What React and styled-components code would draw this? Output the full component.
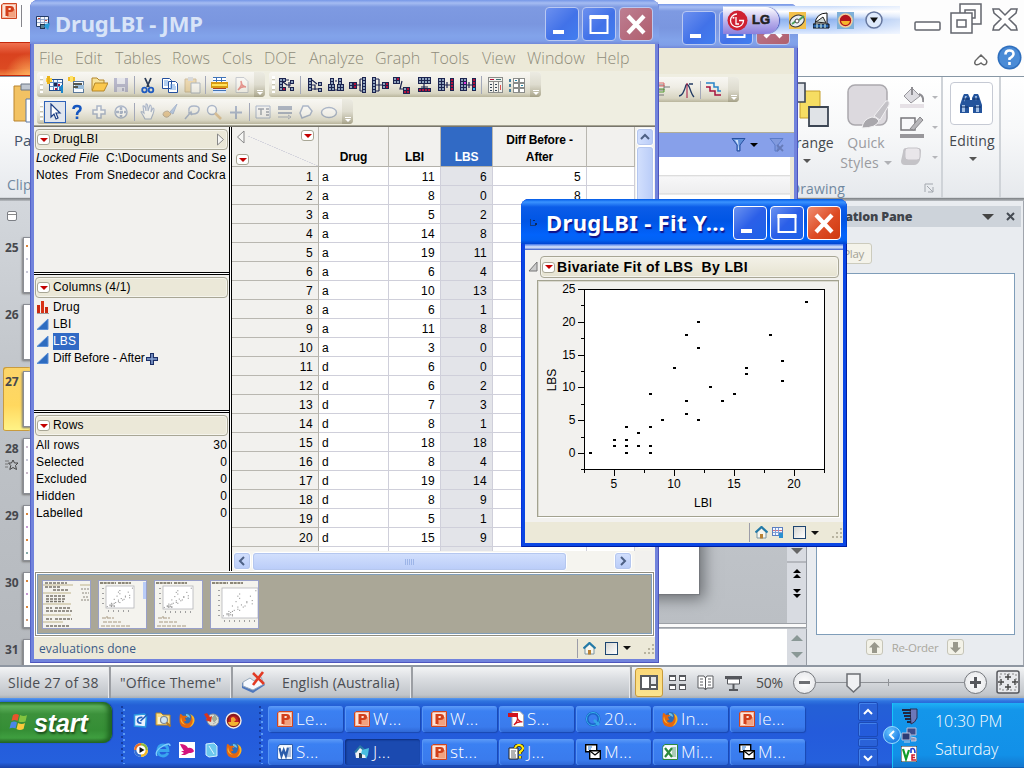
import React from "react";
import styled, { createGlobalStyle, css } from "styled-components";

const Global = createGlobalStyle`
  * { box-sizing: border-box; }
  html, body { margin: 0; padding: 0; overflow: hidden; }
  svg { display: block; flex: none; }
`;

const ui = `"Open Sans", "Noto Sans", sans-serif`;
const arial = `"Liberation Sans", Arial, sans-serif`;

/* ---------- generic drawing helpers ---------- */
const Px = ({ w = 18, h = 18, r = [], children }) => (
  <svg width={w} height={h} viewBox={`0 0 ${w} ${h}`}>
    {r.map(([x, y, a, b, c], i) => (
      <rect key={i} x={x} y={y} width={a} height={b} fill={c} />
    ))}
    {children}
  </svg>
);
const N = "#1c2450";
const S = "#8fa3bd";
const R = "#b3123c";
const sq = (x, y, c = S) => [[x, y, 4, 4, N], [x + 1, y + 1, 2, 2, c]];
const block = (x, y, cols, rows, c = S) => {
  const out = [];
  for (let i = 0; i < cols; i++) for (let j = 0; j < rows; j++) out.push(...sq(x + i * 3, y + j * 3, c));
  return out;
};

/* ---------- desktop & background application ---------- */
const Desktop = styled.div`
  position: relative;
  width: 1024px;
  height: 768px;
  overflow: hidden;
  display: grid;
  grid-template-rows: 77px 124px 466px 31px 70px;
  background: #fdfdfd;
  font-family: ${ui};
`;

const TopRow = styled.header`
  display: grid;
  grid-template-rows: 42px 35px;
  border-bottom: 1px solid #8797a5;
  background: #fdfdfd;
`;
const TitleRow = styled.div`
  display: flex;
  justify-content: space-between;
  padding: 3px 5px 0 1px;
`;
const TitleLeft = styled.div`
  display: flex;
  gap: 4px;
`;
const Divider = styled.i`
  width: 1px;
  height: 22px;
  margin-top: 2px;
  background: #85858b;
`;
const WinCtl = styled.div`
  display: flex;
  gap: 9px;
`;
const TabRow = styled.div`
  display: flex;
  justify-content: space-between;
`;
const FileTab = styled.div`
  width: 34px;
  height: 34px;
  border: 1px solid #c4280c;
  border-left: 0;
  background: radial-gradient(circle at 90% 110%, #ffb45e, transparent 55%), linear-gradient(#f07150, #d9421f 35%, #dc4a22 80%, #f08040);
`;
const HelpRow = styled.div`
  display: flex;
  gap: 9px;
  padding: 3px 2px 0 0;
`;

const Ribbon = styled.section`
  display: flex;
  justify-content: space-between;
  background: linear-gradient(#ffffff, #f7f8f9 45%, #e6e9ed 97%, #84888c 98%, #b9bdc2);
`;
const ClipGroup = styled.div`
  width: 40px;
  overflow: hidden;
  padding-top: 6px;
  font-size: 15px;
  line-height: 20px;
  color: #35598a;
  white-space: nowrap;
  svg { margin-left: 13px; }
`;
const PasteText = styled.div`
  margin: 7px 0 0 14px;
  color: #44546a;
`;
const GroupName = styled.div`
  margin: ${(p) => p.$m || "0"};
  font-size: 14px;
  line-height: 20px;
  color: #7088a0;
`;
const RibbonRight = styled.div`
  width: 234px;
  display: grid;
  grid-template-columns: 50px 56px 47px 58px 23px;
`;
const RibbonCol = styled.div`
  display: flex;
  flex-direction: column;
  align-items: ${(p) => p.$align || "center"};
  padding-top: 5px;
  height: 121px;
  font-size: 14px;
  line-height: 20px;
  letter-spacing: 0.1px;
  color: ${(p) => (p.$dim ? "#9a9ba0" : "#44484e")};
  border-right: ${(p) => (p.$line ? "2px solid #cfd3d8" : "0")};
  white-space: nowrap;
`;
const Label = styled.div`
  margin: ${(p) => p.$m || "0"};
  display: flex;
  align-items: center;
  gap: 5px;
`;
const Tri = styled.i`
  width: 0;
  height: 0;
  border: ${(p) => p.$s || 4}px solid transparent;
  border-top-color: ${(p) => p.$c || "#555"};
  border-bottom: 0;
  margin: ${(p) => p.$m || "0"};
`;
const TriUp = styled(Tri)`
  border: ${(p) => p.$s || 4}px solid transparent;
  border-top: 0;
  border-bottom-color: ${(p) => p.$c || "#555"};
`;
const ToolPair = styled.div`
  display: flex;
  align-items: center;
  gap: 8px;
  height: 30px;
`;
const FindButton = styled.div`
  width: 43px;
  height: 43px;
  border: 1px solid #c6cad4;
  border-radius: 4px;
  background: #fff;
  display: grid;
  place-items: center;
`;

const Workspace = styled.main`
  display: grid;
  grid-template-columns: 31px 776px 217px;
  background: linear-gradient(#d3d7dc, #c0c4c9 40%, #b4b8bd);
  border-bottom: 2px solid #8f97a2;
`;
const SlideList = styled.div`
  display: flex;
  flex-direction: column;
  padding-top: 10px;
  overflow: hidden;
`;
const CheckBox = styled.i`
  width: 10px;
  height: 10px;
  margin-left: 7px;
  margin-bottom: 12px;
  flex: none;
  border: 1px solid #7c7f85;
  background: linear-gradient(#fff 2px, #888 2px, #888 3px, #fff 3px);
  border-radius: 2px;
`;
const SlideItem = styled.div`
  display: grid;
  grid-template-columns: 20px 14px;
  height: 67px;
  flex: none;
  padding-top: 4px;
  margin-left: 3px;
  font: bold 12px/14px ${ui};
  color: #46484d;
  ${(p) =>
    p.$on &&
    css`
      background: linear-gradient(#fbd469, #ffd85f 60%, #fff488);
      box-shadow: inset 1px 1px 0 #c99b3e, inset 0 -1px 0 #c99b3e;
      border-radius: 3px;
      height: 64px;
      margin-bottom: 3px;
    `}
`;
const SlideNo = styled.div`
  padding: 4px 0 0 2px;
  span { display: block; font-size: 14px; line-height: 14px; margin-top: 3px; }
`;
const SlideThumb = styled.div`
  height: 56px;
  border: 1px solid #8a8d94;
  background: #fff;
  box-shadow: -1px 1px 2px #777;
  padding-top: 7px;
`;
const Dot = styled.i`
  display: block;
  width: 2px;
  height: 2px;
  margin: 0 0 11px 2px;
  background: ${(p) => p.$c};
`;
const Editor = styled.div`
  display: grid;
  grid-template-columns: 756px 19px 1px;
  grid-template-rows: 422px 6px 36px;
`;
const Canvas = styled.div`
  padding: 10px 0 29px 60px;
  overflow: hidden;
  background: linear-gradient(#cfd3d8, #bbbfc4);
`;
const Slide = styled.div`
  width: 608px;
  height: 383px;
  background: #fff;
  box-shadow: 5px 5px 14px #6d7074, 1px 1px 1px #8c9097;
`;
const SplitLine = styled.div`
  grid-column: 1 / -1;
  border: 1px solid #9da1a7;
  background: #fafafa;
  margin: 0 0 1px;
`;
const ScrollCol = styled.div`
  display: flex;
  flex-direction: column;
  align-items: center;
  justify-content: ${(p) => (p.$spread ? "space-between" : "flex-end")};
  padding: ${(p) => p.$pad};
  background: #d8dbe1;
`;
const ScrollBreak = styled.i`
  width: 100%;
  height: 2px;
  background: #b4b7bd;
  margin: 7px 0 6px;
`;
const Notes = styled.div`
  background: #fff;
`;
const Edge = styled.i`
  background: #969ba3;
`;
const Pane = styled.aside`
  display: grid;
  grid-template-rows: 21px 46px 362px 1fr;
  padding: 5px 4px 0 9px;
  background: #e9ecf0;
  border-right: 1px solid #a0a5ad;
`;
const PaneHead = styled.div`
  display: flex;
  align-items: center;
  justify-content: flex-end;
  background: #cdd3da;
  margin: 0 -2px 0 -8px;
  padding-right: 6px;
  font: bold 12.5px/20px ${ui};
  letter-spacing: -0.2px;
  color: #3f444b;
  b { margin-right: auto; padding-left: 4px; }
`;
const PlayButton = styled.div`
  width: 56px;
  height: 21px;
  margin-top: 16px;
  padding-right: 7px;
  border: 1px solid #cccbbd;
  border-radius: 3px;
  background: #f4f3ea;
  color: #a2a195;
  font: 11.5px/19px ${ui};
  letter-spacing: -0.3px;
  text-align: right;
`;
const AnimList = styled.div`
  width: 199px;
  border: 1px solid #7f9db9;
  background: #fff;
`;
const Reorder = styled.div`
  display: flex;
  align-items: center;
  justify-content: center;
  gap: 9px;
  margin: -1px 0 0 -5px;
  height: 26px;
  font-size: 11.5px;
  letter-spacing: -0.3px;
  color: #a9a89e;
`;
const ArrowBtn = styled.div`
  width: 17px;
  height: 16px;
  border: 1px solid #c6c5b8;
  border-radius: 3px;
  background: #f3f2e8;
  display: grid;
  place-items: center;
`;

/* ---------- status bar ---------- */
const StatusBar = styled.footer`
  display: grid;
  grid-template-columns: 111px 122px 180px 219px 27px 7px 1fr;
  align-items: stretch;
  background: linear-gradient(#f3f4f5, #d9dce0 40%, #c1c5ca 90%, #a9afb5);
  font-size: 14px;
  line-height: 31px;
  color: #4a4d52;
`;
const StatusCell = styled.div`
  display: flex;
  align-items: center;
  gap: 15px;
  padding-left: ${(p) => p.$pl || 9}px;
  letter-spacing: ${(p) => p.$ls || "0.25px"};
  border-right: 2px solid #9b9ea3;
  box-shadow: inset -1px 0 0 #e8e9eb;
  white-space: nowrap;
`;
const ViewTools = styled.div`
  grid-column: 5 / -1;
  display: flex;
  align-items: center;
  margin-left: 3px;
`;
const ViewSlot = styled.div`
  width: 28px;
  height: 29px;
  display: grid;
  place-items: center;
  ${(p) => p.$on && `background: linear-gradient(#fdd978,#fbe48f); border: 1px solid #c79a3a; border-radius: 3px;`}
`;
const Percent = styled.div`
  width: 46px;
  padding-left: 9px;
  letter-spacing: -0.2px;
  color: #4a4a4a;
`;
const ZoomKnob = styled.div`
  width: 23px;
  height: 23px;
  border-radius: 50%;
  border: 1px solid #75787d;
  background: radial-gradient(#fff, #e1e3e6);
  display: grid;
  place-items: center;
`;
const ZoomTrack = styled.div`
  width: 148px;
  display: flex;
  align-items: center;
  background: linear-gradient(#8f9297, #8f9297) center / 100% 1px no-repeat;
`;

/* ---------- taskbar ---------- */
const Taskbar = styled.nav`
  display: grid;
  grid-template-columns: 112px 156px 590px 20px 14px 132px;
  background: linear-gradient(#5a9af0, #2f74df 3px, #2460d6 7px, #245bdb 50%, #2560dd 92%, #1941a5);
`;
const Start = styled.div`
  display: flex;
  align-items: center;
  height: 41px;
  margin-top: 4px;
  padding-left: 9px;
  gap: 5px;
  border-radius: 0 9px 9px 0;
  background: linear-gradient(#2d7a2f, #5eb25c 4px, #3c913b 12px, #358e35 28px, #3f9f40 36px, #276627);
  box-shadow: inset -4px 0 5px #1f6420, 1px 0 1px #173e97;
  color: #fff;
  font: italic bold 25px/36px "Liberation Sans", sans-serif;
  letter-spacing: -0.1px;
  text-shadow: 1px 2px 2px #1b4e1b;
`;
const Quick = styled.div`
  display: grid;
  grid-template-columns: 8px repeat(5, 23.3px) 1fr;
  grid-template-rows: 30px 30px;
  align-items: center;
  justify-items: center;
  padding: 7px 5px 3px 9px;
`;
const Grip = styled.i`
  grid-row: 1 / 3;
  grid-column: ${(p) => p.$col};
  justify-self: ${(p) => (p.$col === 1 ? "start" : "end")};
  width: 4px;
  height: 58px;
  background:
    radial-gradient(circle at 1px 1px, #153c9f 1px, transparent 1.3px) 0 0 / 4px 6px,
    radial-gradient(circle at 3px 4px, #5c9bf2 1px, transparent 1.3px) 0 0 / 4px 6px;
`;
const Tasks = styled.div`
  display: grid;
  grid-template-columns: repeat(7, 75px);
  grid-template-rows: 26px 26px;
  gap: 7px 2px;
  padding-top: 8px;
`;
const TaskButton = styled.div`
  display: flex;
  align-items: center;
  gap: 3px;
  padding-left: 9px;
  border-radius: 3px;
  font: 300 17px/24px ${ui};
  color: #fff;
  background: ${(p) => (p.$on ? "#1b4ab0" : "linear-gradient(#5d9bf7, #3b80f2 5px, #3a7bed 80%, #2f68d6)")};
  box-shadow: ${(p) => (p.$on ? "inset 1px 1px 2px #0d2d7c" : "inset 1px 0 0 #5695f5, 1px 1px 1px #1a49b2")};
  span { letter-spacing: 0.3px; white-space: nowrap; }
`;
const TaskScroll = styled.div`
  display: grid;
  grid-template-rows: 19px 15px 9px 19px;
  gap: 1px;
  padding-top: 4px;
`;
const ScrollKey = styled.div`
  display: grid;
  place-items: center;
  border: 1px solid #1c4bb8;
  border-radius: 2px;
  box-shadow: inset 1px 1px 0 #4382ea;
  background: ${(p) => (p.$flat ? "transparent" : "#2a62d8")};
`;
const Tray = styled.div`
  grid-column: 6;
  display: grid;
  grid-template-columns: 32px 1fr;
  margin-top: 5px;
  border-left: 1px solid #16c7f8;
  background: linear-gradient(#1fb1f5, #1496ea 7px, #1290e8 80%, #1378cf 98%, #0d4fa2);
`;
const TrayIcons = styled.div`
  display: flex;
  flex-direction: column;
  gap: 2px;
  padding: 5px 0 0 8px;
`;
const Clock = styled.div`
  padding: 4px 0 0 10px;
  font: 300 16px/28px ${ui};
  color: #fff;
  letter-spacing: -0.05px;
`;
const Chevron = styled.div`
  position: absolute;
  left: 883px;
  top: 726px;
  width: 18px;
  height: 18px;
  border-radius: 50%;
  display: grid;
  place-items: center;
  background: radial-gradient(circle at 40% 30%, #6cc7ff, #1d7fe6 70%);
  border: 1px solid #9bdcff;
`;

/* ---------- windows ---------- */
const Window = styled.section`
  position: absolute;
  left: ${(p) => p.$x}px;
  top: ${(p) => p.$y}px;
  width: ${(p) => p.$w}px;
  height: ${(p) => p.$h}px;
  display: flex;
  flex-direction: column;
  border-radius: 8px 8px 0 0;
  padding: 0 4px 4px;
  background: ${(p) => (p.$active ? "#0a46e4" : "#7183dc")};
  box-shadow: inset 1px 0 0 ${(p) => (p.$active ? "#0831d9" : "#5463c8")}, inset -1px -1px 0 ${(p) => (p.$active ? "#001ea0" : "#4e55bd")};
`;
const Titlebar = styled.div`
  display: flex;
  align-items: center;
  height: ${(p) => p.$h}px;
  flex: none;
  margin: 0 -4px;
  padding: ${(p) => p.$pad};
  border-radius: 8px 8px 0 0;
  background: ${(p) =>
    p.$active
      ? "linear-gradient(#0058e6, #3a93ff 3px, #0b5ce8 8px, #0055e5 22px, #0263fb 36px, #0262f4 41px, #0144d0)"
      : "linear-gradient(#7697e7, #a5bcf2 3px, #7e9ae2 7px, #7a96df 24px, #82a3ea 36px, #7f9fe8 41px, #7288d8)"};
`;
const TitleText = styled.div`
  flex: 1;
  font: bold 22px/30px "Noto Sans", ${ui};
  letter-spacing: ${(p) => p.$ls};
  padding: 0 0 2px ${(p) => p.$pl || 0}px;
  color: ${(p) => (p.$active ? "#fff" : "#d8e4f8")};
  text-shadow: ${(p) => (p.$active ? "1px 2px 1px #0f1089" : "none")};
  white-space: pre;
`;
const CaptionRow = styled.div`
  display: flex;
  gap: 3px;
`;
const CaptionBtn = styled.div`
  width: 34px;
  height: 34px;
  border: 1px solid ${(p) => (p.$active ? "#fff" : "#b9c8f2")};
  border-radius: 4px;
  display: grid;
  place-items: center;
  background: ${(p) =>
    p.$red
      ? p.$active
        ? "linear-gradient(135deg, #ef8d70, #dd4b24 55%, #cf3a10)"
        : "linear-gradient(135deg, #bd7f92, #b56a7c 60%, #b0606d)"
      : p.$active
        ? "linear-gradient(135deg, #6b93f0, #2b5fe8 50%, #1b62e8)"
        : "linear-gradient(135deg, #6c90ef, #4272e8 55%, #427ef0)"};
`;
const MinMark = () => <Px w={26} h={26} r={[[4, 19, 11, 4, "#fff"]]} />;
const MaxMark = () => (
  <svg width="26" height="26"><path d="M4.500 6h17v16h-17z" fill="none" stroke="#fff" strokeWidth="2" /><path d="M3.500 4h19v4h-19z" fill="#fff" /></svg>
);
const CloseMark = () => (
  <svg width="26" height="26"><path d="M5 5l16 17M21 5L5 22" stroke="#fff" strokeWidth="4.200" /></svg>
);
const Caption = ({ active }) => (
  <CaptionRow>
    <CaptionBtn $active={active}><MinMark /></CaptionBtn>
    <CaptionBtn $active={active}><MaxMark /></CaptionBtn>
    <CaptionBtn $active={active} $red><CloseMark /></CaptionBtn>
  </CaptionRow>
);
const MenuBar = styled.div`
  display: flex;
  height: 27px;
  flex: none;
  padding-left: 5px;
  background: #ece9d8;
  font: 300 16px/28px ${ui};
  color: #8f8c7a;
`;
const MenuItem = styled.div`
  width: ${(p) => p.$w}px;
  white-space: nowrap;
`;
const ToolArea = styled.div`
  height: 55px;
  flex: none;
  padding: 1px 0 0 3px;
  background: #efeee1;
  border-bottom: 1px solid #a5a392;
`;
const ToolLine = styled.div`
  display: flex;
  gap: 4px;
  margin-bottom: 2px;
`;
const Toolbar = styled.div`
  display: flex;
  align-items: center;
  width: ${(p) => p.$w}px;
  height: 25px;
  border-radius: 3px 4px 4px 3px;
  background: linear-gradient(#f8f7f3, #efede5 40%, #d8d5c2 85%, #b9b59c);
  overflow: hidden;
`;
const ToolGrip = styled.i`
  width: 3px;
  height: 17px;
  margin: 0 1px 0 3px;
  background: repeating-linear-gradient(#fff 0 3px, #c9c6b6 3px 4px, transparent 4px 5px);
`;
const ToolSlot = styled.div`
  width: 22px;
  height: 22px;
  flex: none;
  display: grid;
  place-items: center;
  opacity: ${(p) => (p.$dim ? 0.42 : 1)};
  ${(p) => p.$on && "border: 1px solid #2f62b8; background: #e1e6ee;"}
`;
const ToolSep = styled.i`
  width: 1px;
  height: 18px;
  margin: 0 2px;
  background: #a3a8b8;
`;
const Overflow = styled.div`
  margin-left: auto;
  width: 11px;
  height: 25px;
  display: flex;
  flex-direction: column;
  align-items: center;
  justify-content: flex-end;
  gap: 1px;
  padding-bottom: 2px;
  background: linear-gradient(#ecebe2, #dedccf 50%, #b5b19a 90%, #a39f85);
  &::before { content: ""; width: 6px; height: 1px; background: #fff; }
`;
const More = () => <Overflow><Tri $s={3} $c="#fff" /></Overflow>;

const JmpBody = styled.div`
  display: grid;
  grid-template-columns: 195px 3px 1fr;
  height: 446px;
  flex: none;
  background: #f2f1ee;
  border-top: 1px solid #77756c;
  padding-right: 1px;
`;
const LeftCol = styled.div`
  display: grid;
  grid-template-rows: 145px 3px 135px 3px 1fr;
  font: 12px/17px ${arial};
  letter-spacing: 0.18px;
  color: #000;
  background: #f2f1ee;
  min-width: 0;
`;
const Double = styled.i`
  background: ${(p) => (p.$v ? "linear-gradient(90deg,#000 1px,#fff 1px,#fff 2px,#000 2px)" : "linear-gradient(#000 1px,#fff 1px,#fff 2px,#000 2px)")};
`;
const Panel = styled.div`
  padding: 2px 1px 0 0;
  overflow: hidden;
`;
const PanelHead = styled.div`
  display: flex;
  align-items: center;
  height: 21px;
  margin: 0 0 ${(p) => p.$mb || 0}px 1px;
  padding: 0 2px 0 1px;
  border: 1px solid #a8a695;
  border-radius: 4px;
  background: #ebe8d8;
  box-shadow: inset 0 0 0 1px #f5f4ec;
  gap: 3px;
  span { flex: 1; }
`;
const HotSpot = styled.i`
  width: 13px;
  height: 11px;
  flex: none;
  border: 1px solid #a8a695;
  border-radius: 3px;
  background: #fff;
  display: grid;
  place-items: center;
`;
const Hot = () => <HotSpot><Tri $s={4} $c="#c40000" /></HotSpot>;
const Line = styled.div`
  display: flex;
  align-items: center;
  height: 17px;
  padding: 0 1px 0 2px;
  white-space: pre;
  gap: ${(p) => p.$gap || 0}px;
  letter-spacing: ${(p) => p.$ls || "inherit"};
  justify-content: ${(p) => (p.$between ? "space-between" : "flex-start")};
`;
const FormulaName = styled.span`
  display: flex;
  align-items: center;
  gap: 1px;
`;
const Picked = styled.span`
  background: #316ac5;
  color: #fff;
  padding-right: 3px;
  height: 17px;
`;
const GridArea = styled.div`
  display: grid;
  grid-template-columns: 403px 19px;
  grid-template-rows: 424px 20px;
  overflow: hidden;
`;
const Table = styled.div`
  overflow: hidden;
  background: #fff;
  font: 12px/17px ${arial};
  color: #000;
`;
const TableRow = styled.div`
  display: grid;
  grid-template-columns: 87px 70px 52px 52px 94px 1fr;
  grid-template-rows: ${(p) => (p.$head ? 40 : 19)}px;
`;
const HeadCell = styled.div`
  display: flex;
  align-items: flex-end;
  justify-content: center;
  text-align: center;
  padding-bottom: 0;
  font: bold 12px/17px ${arial};
  background: ${(p) => (p.$on ? "#316ac5" : "#f2f1ee")};
  color: ${(p) => (p.$on ? "#fff" : "#000")};
  border-right: 1px solid #b9b7b0;
  border-bottom: 1px solid #b3b1aa;
  letter-spacing: -0.15px;
`;
const Corner = styled.div`
  display: grid;
  grid-template-columns: 1fr 1fr;
  padding: 3px 4px 1px 4px;
  background: linear-gradient(to top right, transparent 49.2%, #d3d3dc 49.6%, #d3d3dc 50.4%, transparent 50.8%) right bottom / 70px 30px no-repeat, #f2f1ee;
  border-right: 1px solid #b9b7b0;
  border-bottom: 1px solid #b3b1aa;
  justify-items: start;
  > :nth-child(2) { justify-self: end; }
  > :last-child { align-self: end; }
`;
const Cell = styled.div`
  padding: 2px 5px 0 3px;
  line-height: 16px;
  text-align: ${(p) => (p.$left ? "left" : "right")};
  letter-spacing: 0.35px;
  background: ${(p) => (p.$num ? "#f2f1ee" : p.$on ? "#e3e4e9" : "#fff")};
  border-right: 1px solid ${(p) => (p.$num ? "#b3b1aa" : "#cfcfda")};
  border-bottom: 1px solid ${(p) => (p.$num ? "#b9b7b0" : "#cfcfda")};
`;
const VScroll = styled.div`
  background: #f4f3ee;
  padding: 1px 0 0 1px;
`;
const ScrollBtn = styled.div`
  width: ${(p) => p.$w || 18}px;
  height: ${(p) => p.$h || 18}px;
  border: 1px solid #fff;
  outline: 1px solid #b5c7ef;
  outline-offset: -2px;
  border-radius: 4px;
  background: linear-gradient(${(p) => (p.$v ? "90deg" : "180deg")}, #d3e0fd, #b9ccf8);
  display: grid;
  place-items: center;
`;
const HScroll = styled.div`
  display: flex;
  grid-column: 1 / 2;
  background: #f5f4ef;
  padding: 1px 0 0 1px;
  gap: 1px;
`;
const ThumbStrip = styled.div`
  height: 64px;
  flex: none;
  display: flex;
  gap: 7px;
  padding: 7px 6px;
  margin: 0 1px 0 1px;
  border: 1px solid #8f8d80;
  outline: 1px solid #fff;
  box-shadow: inset 0 0 0 1px #fff, inset 0 0 0 2px #7f9db9;
  background: #aaa797;
`;
const MiniReport = styled.div`
  width: 49px;
  height: 49px;
  border: 1px solid #99a0c8;
  background: #f4f3ee;
  overflow: hidden;
`;
const JmpStatus = styled.div`
  display: flex;
  align-items: center;
  height: ${(p) => p.$h}px;
  flex: none;
  margin-top: ${(p) => p.$mt || 0}px;
  padding-left: 5px;
  background: #ece9d8;
  font: 12px/20px ${ui};
  letter-spacing: 0.08px;
  color: #3a5a86;
  span { flex: 1; padding-top: 2px; }
`;
const StatusIcons = styled.div`
  display: flex;
  align-items: center;
  height: 19px;
  gap: ${(p) => p.$gap || 3}px;
  padding-left: 5px;
  border-left: 1px solid #9c9da8;
`;
const Box = styled.i`
  width: 13px;
  height: 13px;
  border: 1px solid #1c4470;
  background: linear-gradient(135deg, #d6d6d2, #fff);
  margin: 0 ${(p) => p.$mr || 1}px 0 ${(p) => p.$ml || 5}px;
`;

/* second data window, mostly hidden */
const BackArea = styled.div`
  flex: 1;
  display: grid;
  grid-template-rows: 26px 59px 24px 1fr;
  background: #ece9d8;
`;
const BackTools = styled.div`
  display: flex;
  justify-content: flex-end;
  align-items: flex-start;
  padding: 3px 55px 0 0;
  background: #efeee1;
  border-bottom: 1px solid #b0ad98;
`;
const BackBlue = styled.div`
  display: flex;
  justify-content: flex-end;
  align-items: center;
  gap: 3px;
  padding-right: 9px;
  background: #87a0ea;
`;
const BackWhite = styled.div`
  background: linear-gradient(#fff 18px, #d4d4d4 18px, #f7f7f8 20px, #eeeeef 36px, #d4d4d4 37px, #fff 38px);
  margin-right: 4px;
`;

/* vendor bar */
const VendorBar = styled.div`
  position: absolute;
  left: 723px;
  top: 6px;
  width: 177px;
  height: 28px;
  display: flex;
  align-items: center;
  gap: 7px;
  background: linear-gradient(90deg, transparent 60%, rgba(255,255,255,0.55)), linear-gradient(#c9dbfa, #fff 20%, #c3d7f8 38%, #8fb3ee 48%, #a9c6f6 70%, #e0ebff);
`;
const VendorLogo = styled.div`
  display: flex;
  align-items: center;
  flex: none;
  gap: 4px;
  width: 56px;
  height: 27px;
  padding-left: 4px;
  margin-right: 3px;
  border-radius: 0 15px 15px 0;
  background: linear-gradient(#fff, #b9b0ea 55%, #8c7fdc);
  box-shadow: 1px 0 1px #4a55b8;
  font: 900 13px/20px ${arial};
  -webkit-text-stroke: 0.6px #222;
  color: #222;
`;

/* report window */
const Strip = styled.div`
  height: 6px;
  flex: none;
  background: linear-gradient(#3d72ea, #dbe6fb 3px, #b2c5f2 4px, #3558c8);
`;
const Report = styled.div`
  flex: 1;
  display: grid;
  grid-template-columns: 12px 1fr;
  grid-template-rows: 24px 237px;
  padding: 6px 4px 0 3px;
  background: #f2f1ee;
`;
const ReportHead = styled(PanelHead)`
  height: 22px;
  margin: 0;
  font: bold 14px/20px ${arial};
  letter-spacing: 0.35px;
  white-space: pre;
  padding-left: 1px;
  gap: 2px;
  background: linear-gradient(#f3f1e8, #e6e3d0);
`;
const PlotFrame = styled.div`
  grid-column: 1 / -1;
  margin-left: 9px;
  border: 1px solid #a3a28f;
  box-shadow: inset 1px 1px 0 #dad9cf, 1px 1px 0 #fff;
`;

/* ---------- icons ---------- */
const PptIcon = () => (
  <svg width="16" height="16" viewBox="0 0 16 16">
    <path d="M2 .5h13.5v15H.5V2z" fill="#f4b8a0" stroke="#cf4520" />
    <path d="M2 2h12v12H2z" fill="#fce4d8" />
    <path d="M10 6h4v8H6v-3z" fill="#f3a27f" />
    <path d="M4.500 3h5q3.500 0 3.500 3t-3.500 3H7.500v4H4.500zM7.500 5v2h1.500q1 0 1-1t-1-1z" fill="#d2401b" fillRule="evenodd" />
  </svg>
);
const DocIcon = ({ c, mark }) => (
  <svg width="16" height="16" viewBox="0 0 16 16">
    <path d="M1 2l2-1.500h12.500v15H1z" fill="#eef3fb" stroke={c} />
    <path d="M9 4h5M9 6h5M9 8h5M9 10h5M9 12h5" stroke={c} strokeWidth=".7" />
    <path d="M1 3l9-1v12H1z" fill="#fff" opacity=".8" />
    <path d={mark} fill="none" stroke={c} strokeWidth="2.200" />
  </svg>
);
const WordIcon = () => <DocIcon c="#2a5caa" mark="M2.500 4l2 8 2.200-6 2.200 6 2-8" />;
const ExcelIcon = () => <DocIcon c="#2f8a3c" mark="M3 4l7 9M10 4l-7 9" />;
const PdfIcon = () => (
  <svg width="16" height="16" viewBox="0 0 16 16">
    <path d="M4 .5h8l3.500 3.500v11.500H4z" fill="#fff" stroke="#aaa" />
    <path d="M0 2h10v4H0z" fill="#d3121b" />
    <path d="M6 14q5-5 3-9 0 5 5.500 6Q9 10 6 14" fill="none" stroke="#d3121b" strokeWidth="1.200" />
  </svg>
);
const QtIcon = () => (
  <svg width="16" height="16" viewBox="0 0 16 16">
    <circle cx="8" cy="8" r="6" fill="none" stroke="#1a62c8" strokeWidth="3" />
    <circle cx="8" cy="8" r="6.500" fill="none" stroke="#35b3ea" />
    <path d="M9 9l5 5" stroke="#35a6e8" strokeWidth="2.500" />
  </svg>
);
const FoxIcon = () => (
  <svg width="16" height="16" viewBox="0 0 16 16">
    <circle cx="8.500" cy="7.500" r="6.500" fill="#2d6cb8" />
    <path d="M7 2q4 0 4 4-3-2-4 0" fill="#68c2ee" />
    <path d="M1 2q2 0 3 2 3-1 5 1-3 0-3 2 2 1 1 2-2 0-2 1 3 3 6 0 2-3 1-6 3 2 2.500 6-1 6-7 6Q0 15 .5 8 .5 4 1 2" fill="#e4660f" />
    <path d="M11 2q5 2 4.500 7-1 5-5 6 4-4 3-8-.5-3-2.500-5" fill="#f9b522" />
    <path d="M2 5q1 6 5 8-5-1-5.500-5z" fill="#fbb02c" />
  </svg>
);
const MailIcon = () => (
  <svg width="16" height="16" viewBox="0 0 16 16">
    <path d="M.7.700h11v7h-11z" fill="#fff" stroke="#000" strokeWidth="1.400" />
    <path d="M3 3h4M3 5h3" stroke="#2a7bd2" />
    <path d="M4.700 6.700h10.600v8H4.700z" fill="#fff" stroke="#000" strokeWidth="1.400" />
    <path d="M5 7l5 4 5-4" fill="none" stroke="#000" strokeWidth="1.200" />
  </svg>
);
const HelpDoc = () => (
  <svg width="16" height="16" viewBox="0 0 16 16">
    <path d="M1 4h9v11H1z" fill="#fff" stroke="#222" /><path d="M3 7h5M3 9h4M3 11h5M3 13h5" stroke="#666" />
    <path d="M7 4q1-3 4-3t4 3q0 2-3 4v2M12 12v2.500" fill="none" stroke="#222" strokeWidth="3.400" />
    <path d="M7 4q1-3 4-3t4 3q0 2-3 4v2M12 12v2.500" fill="none" stroke="#ffe80a" strokeWidth="2.200" />
  </svg>
);
const JmpSmall = ({ s = 15 }) => (
  <svg width={s} height={s} viewBox="0 0 15 15">
    <path d="M.500.500h12v10h-12z" fill="#f4f6fb" stroke="#223a66" />
    <path d="M1 3.500h11M1 6.500h11M4.500 1v10M8.500 1v10" stroke="#7f97c0" strokeWidth=".8" />
    <path d="M2 2h2v1H2zM9 4h2v1H9z" fill="#d34a3a" /><path d="M4 8h5v5H4z" fill="#20354f" /><path d="M5 9h3v3H5z" fill="#5d7f93" />
    <path d="M9 8l5-1-1 4-1 3-2-2-2-1z" fill="#2a9bd8" />
  </svg>
);
const JmpTask = () => (
  <svg width="16" height="16" viewBox="0 0 16 16">
    <path d="M1 8l5-6 6 5v7H2z" fill="#eef1f4" /><path d="M0 8l6-7 7 6-2 1-5-4-4 5z" fill="#2878a6" /><path d="M5 9h3v5H5z" fill="#273b4c" />
    <path d="M8 6l7-2-1 7-2 4-1-4-4-1z" fill="#49bde0" />
  </svg>
);
const Home = () => (
  <svg width="13" height="13" viewBox="0 0 13 13">
    <path d="M2 6v6h9V6L6.500 2z" fill="#f7f6ee" stroke="#7a96a5" /><path d="M.5 6.500l6-5.500 6 5.500" fill="none" stroke="#237aa8" strokeWidth="2.200" />
    <path d="M5 8h3v4.500H5z" fill="#b98133" />
  </svg>
);
const SheetIcon = () => (
  <Px w={13} h={13} r={[[1, 1, 11, 9, "#5b7fc0"], [2, 2, 9, 7, "#f4f7ff"], [2, 4, 9, 1, "#d3707c"], [2, 6, 9, 1, "#7f9fd6"], [4, 2, 1, 7, "#7f9fd6"], [7, 2, 1, 7, "#7f9fd6"], [8, 7, 4, 5, "#2a8fd0"]]} />
);
const ResizeGrip = () => (
  <Px w={13} h={13} r={[[10, 2, 2, 2], [6, 6, 2, 2], [10, 6, 2, 2], [2, 10, 2, 2], [6, 10, 2, 2], [10, 10, 2, 2]].map((a) => [...a, "#b8b4a0"])} />
);
const WinFlag = () => (
  <svg width="20" height="19" viewBox="0 0 20 19">
    <path d="M4 2q3-2 6 0l-1.500 6q-3-2-6 0z" fill="#e8542c" /><path d="M11 2q4 2 7 0l-1.500 6.500q-4 1-7 0z" fill="#83c440" />
    <path d="M2 9.500q3-2 6 0L6.500 15.500q-3-1.500-6 0z" fill="#4a86e8" /><path d="M9 10q4 2 7 0l-1.500 6q-4 2-7 0z" fill="#fbc93b" />
  </svg>
);
const Folder = () => (
  <svg width="17" height="17" viewBox="0 0 17 17">
    <path d="M1 2h5l2 2h5v10H1z" fill="#f8e39a" stroke="#b4872a" /><path d="M4 7h13l-4 8H1z" fill="#fbc84d" stroke="#b4872a" />
  </svg>
);
const SearchFolder = () => (
  <svg width="17" height="16" viewBox="0 0 17 16">
    <path d="M1 1h5l2 2h7v10H1z" fill="#fbe08a" stroke="#b4872a" /><path d="M3 5h9v7H3z" fill="#fff6d0" />
    <circle cx="9" cy="8" r="3.500" fill="#cfe4f5" stroke="#7d8894" strokeWidth="1.200" /><path d="M11.500 10.500l4 4" stroke="#b07a2a" strokeWidth="2" />
  </svg>
);
const PictureBadge = () => (
  <svg width="17" height="17" viewBox="0 0 17 17">
    <circle cx="8.500" cy="8.500" r="7.500" fill="#8b1a1e" stroke="#f5eee6" strokeWidth="1.400" />
    <path d="M3.500 10q0-6 5-6t5 6z" fill="#c21f23" /><path d="M3 10h11q-1 4-5.500 4T3 10" fill="#f4b531" /><path d="M6 6q3-3 5 2l-2 2H6z" fill="#f0a531" />
  </svg>
);
const quickIcons = [
  <svg key="a" width="16" height="16"><path d="M1.500 3l10-1 2 2-1 11-11-1z" fill="#eaf3ff" stroke="#2c9ae0" strokeWidth="1.500" /><path d="M9.500 5.500q-5-.5-5 3 .5 3 4 2.500M7.500 9l7.500-7" fill="none" stroke="#2560c0" strokeWidth="1.700" /></svg>,
  <SearchFolder key="b" />,
  <FoxIcon key="c" />,
  <svg key="d" width="16" height="16"><circle cx="10" cy="8" r="6" fill="#dcdcd2" stroke="#8b9197" /><path d="M9 6l3-3 2 4-3 3zM10 12l3-2" fill="#a3ae98" stroke="#8a9a90" strokeWidth=".6" /><path d="M1 2l3-1 3 4 2-1-1 6-6-2 2-1z" fill="#d8341c" /></svg>,
  <PictureBadge key="e" />,
  <svg key="f" width="16" height="16"><circle cx="8" cy="8" r="7" fill="#fff" /><path d="M8 1a7 7 0 00-7 7h4a3 3 0 013-3z" fill="#e96d24" /><path d="M8 1a7 7 0 017 7h-4a3 3 0 00-3-3z" fill="#8fb73a" /><path d="M15 8a7 7 0 01-7 7v-4a3 3 0 003-3z" fill="#f0b824" /><path d="M8 15a7 7 0 01-7-7h4a3 3 0 003 3z" fill="#346fd2" /><circle cx="8" cy="8" r="4.600" fill="#fff" /><path d="M6.500 5l5 3-5 3z" fill="#111" /></svg>,
  <svg key="g" width="17" height="16"><path d="M13 11q-2 3-5 3-5 0-5-5.500T8 3q5 0 5 5.500H4" fill="none" stroke="#39a5ef" strokeWidth="2.800" /><path d="M2 14q-3-5 6-10 7-4 7 0" fill="none" stroke="#7fd0fb" strokeWidth="1.300" /></svg>,
  <svg key="h" width="16" height="16"><rect width="16" height="16" fill="#fff" /><path d="M1 2q6 0 8 4 4-1 6 3-1 2-5 2l-4 2H2l3-2-3-2h3Q2 5 1 2" fill="#d4147d" /></svg>,
  <svg key="i" width="16" height="16"><path d="M3 2l8-1 3 3v10l-8 1-3-2z" fill="#6cc7ee" stroke="#d6f2ff" /><path d="M6 4l5 8" stroke="#ddf5ff" /></svg>,
  <FoxIcon key="j" />,
];
const Bino = () => (
  <svg width="24" height="21" viewBox="0 0 24 21">
    <path d="M4 3l1-2h4l2 4v2h2V5l2-4h4l1 2 3 9v8h-9v-6h-4v6H1v-8z" fill="#24549c" />
    <path d="M6 3h2L5 9zM18 3h-2l1 5zM3 12h3v7H3zM17 12h3v7h-3z" fill="#a3bfe4" /><path d="M4 6h6M14 6h6M2 14h7M15 14h7" stroke="#0e2f66" />
  </svg>
);
const Clipboard = () => (
  <svg width="28" height="40" viewBox="0 0 28 40">
    <path d="M1 3h24v35H1z" fill="#f2c263" stroke="#b9842f" /><path d="M8 1h12v6H8z" fill="#bfc6d0" stroke="#6c7785" /><path d="M13 16h14v23H13z" fill="#fff" stroke="#5b79a5" />
  </svg>
);
const ArrangeIcon = () => (
  <svg width="44" height="46" viewBox="0 0 44 46">
    <path d="M10 9h20v27H10z" fill="#f6dd62" stroke="#c69f2c" /><path d="M0 1h15v19H0z" fill="#dfe2e7" stroke="#3c4553" strokeWidth="1.600" /><path d="M19 25h19v19H19z" fill="#e0e3e7" stroke="#3c4553" strokeWidth="1.800" />
  </svg>
);
const StylesIcon = () => (
  <svg width="43" height="45" viewBox="0 0 43 45">
    <rect x="1" y="1" width="39" height="40" rx="7" fill="#dcd9de" stroke="#aaa8ad" strokeWidth="1.500" />
    <path d="M15 44q1-9 10-11 5 0 7 4-3 7-17 7" fill="#a9a7ac" stroke="#f1f0f2" /><path d="M27 32L39 17q4-1 3 4L33 36z" fill="#c3c1c6" stroke="#f1f0f2" />
  </svg>
);
const FillIcon = () => (
  <svg width="24" height="24"><path d="M4 11l8-8 8 8-9 7z" fill="#dddce1" stroke="#97969b" /><path d="M12 2v8M19 9q5 2 4 8" fill="none" stroke="#8e8d92" strokeWidth="2" /><path d="M0 19h24v4H0z" fill="#e6e1e6" /></svg>
);
const OutlineIcon = () => (
  <svg width="24" height="24"><path d="M1 3h14v12H1z" fill="#f8f8fa" stroke="#77767b" strokeWidth="1.500" /><path d="M10 14L20 2l3 3-9 10z" fill="#b7b6ba" stroke="#88878b" /><path d="M0 19h24v4H0z" fill="#98979b" /></svg>
);
const EffectIcon = () => (
  <svg width="24" height="22"><path d="M6 2h12q3 0 3 3l-1 9q-2 5-6 5H5q-4 0-4-4l2-9q0-4 3-4" fill="#c4c3c7" /><rect x="5" y="2" width="15" height="12" rx="3" fill="#e9e6ea" stroke="#c5c3c8" /></svg>
);
const LgIcon = () => (
  <svg width="21" height="21"><circle cx="10.500" cy="10.500" r="10" fill="#cf2031" /><path d="M10 4a6.500 6.500 0 106.500 6.500H12M9 7v7h3" fill="none" stroke="#fff" strokeWidth="1.300" /><circle cx="6.500" cy="7.800" r="1" fill="#fff" /></svg>
);
const Funnel = ({ off }) => (
  <svg width="16" height="16" viewBox="0 0 16 16" opacity={off ? 0.45 : 1}>
    <path d="M1 1.500h13L9 8v6H6V8z" fill={off ? "#7b93d0" : "#5f8fd8"} stroke="#274f9e" />
    {!off && <path d="M4 3h3l1 10H7V8z" fill="#cfe2fb" />}
    {off && <path d="M8 8l6 6M14 8l-6 6" stroke="#3f4f7f" strokeWidth="1.800" />}
  </svg>
);
const StarFx = () => (
  <svg width="14" height="12" viewBox="0 0 14 12"><path d="M8 1l1.500 3h3.500l-2.500 2.500 1 4L8 8.500 4.800 10.500l1-4L3.500 4h3z" fill="none" stroke="#444" /><path d="M0 2h4M0 5h3M0 8h3" stroke="#777" /></svg>
);

const toolsA = [
  <Px r={[[3, 3, 14, 12, "#25518f"], [4, 4, 12, 10, "#f4f8ff"], [4, 6, 12, 1, "#5d86bd"], [4, 10, 12, 1, "#5d86bd"], [7, 4, 1, 10, "#5d86bd"], [11, 4, 1, 10, "#5d86bd"], [8, 7, 3, 3, N], [12, 8, 2, 2, R], [9, 12, 2, 2, R], [13, 11, 4, 3, "#1c87cc"], [15, 9, 2, 8, "#1c87cc"], [0, 2, 6, 4, "#ffd541"], [1, 0, 3, 8, "#eab31b"]]} />,
  <Px r={[[5, 5, 11, 12, "#5b799b"], [6, 6, 9, 10, "#f8fbff"], [0, 1, 7, 4, "#f0bd28"], [2, 0, 3, 6, "#ffe36b"], [7, 9, 9, 4, "#9bbcd9"], [5, 7, 9, 2, "#55564e"], [5, 10, 5, 2, "#55564e"]]} />,
  <Folder />,
  <Px r={[[2, 2, 14, 14, "#6d70a8"], [5, 2, 8, 6, "#d9dcf1"], [5, 11, 8, 5, "#c4c7e5"], [10, 12, 2, 3, "#5c5f98"]]} />,
];
const toolsB = [
  <Px><path d="M6 2l4 9M12 2L8 11" stroke="#2b3c58" strokeWidth="1.800" /><circle cx="5.500" cy="14" r="2.300" fill="none" stroke="#1f5bc0" strokeWidth="1.800" /><circle cx="12" cy="14" r="2.300" fill="none" stroke="#1f5bc0" strokeWidth="1.800" /></Px>,
  <Px><path d="M1.500 2.500h7l2 2v8h-9zM7.500 5.500h7l2 2v9h-9z" fill="#fff" stroke="#234f9e" /><path d="M3 5h4M3 7h4M3 9h4M9 9h5M9 11h6M9 13h6" stroke="#6aa0e0" /></Px>,
];
const pasteIcon = <Px><path d="M2 3h11v13H2z" fill="#e4b764" stroke="#a07a3a" /><path d="M5 1h5v4H5z" fill="#b5bac6" /><path d="M8 7h9v10H8z" fill="#fff" stroke="#5d7090" /></Px>;
const journalIcons = [
  <Px r={[[3, 1, 13, 6, "#fff"], [3, 1, 13, 1, "#3f73b9"], [3, 4, 13, 1, "#3f73b9"], [6, 1, 1, 16, "#3f73b9"], [11, 1, 1, 16, "#3f73b9"], [1, 6, 17, 6, "#d89a14"], [2, 8, 15, 2, "#ffe35b"], [3, 12, 13, 5, "#dbe8f8"], [3, 14, 13, 1, "#3f73b9"], [3, 12, 13, 1, "#ad411f"]]} />,
];
const pdfDim = <Px><path d="M4 1.500h8l4 4v11H4z" fill="#fff" stroke="#8a94a8" /><path d="M6 14q5-5 3-9 0 5 5 6-5-1-8 3" fill="none" stroke="#d22" strokeWidth="1.500" /></Px>;
const link = (...d) => <path d={d.join("")} fill="none" stroke={N} strokeWidth="1.200" />;
const jmpGroup = [
  <Px r={[...block(1, 2, 1, 4), ...block(12, 4, 1, 1), ...block(12, 11, 1, 1), ...sq(4, 2), ...sq(4, 11, R)]}>{link("M5 6l4 3M8 4h3M8 9h5M11 6v6")}</Px>,
  <Px r={[...block(3, 2, 1, 4), ...block(13, 6, 1, 1), ...block(13, 12, 1, 1)]}>{link("M7 4l5 4M7 13l6 0M7 9h3v5")}</Px>,
  <Px r={[...block(1, 8, 2, 2), ...block(10, 8, 2, 2), ...block(3, 2, 1, 2), ...block(11, 2, 1, 2)]}>{link("M8 14h2M8 5h2")}</Px>,
  <Px r={[...block(0, 6, 1, 2), ...block(4, 6, 1, 2, R), ...block(13, 1, 1, 5)]}>{link("M8 9h4M11 3v12M11 3h3M11 15h3")}</Px>,
  <Px r={[...block(1, 1, 1, 5), ...block(11, 6, 1, 2), ...block(14, 6, 1, 2, R)]}>{link("M5 9h6M8 3v12M5 3h3M5 15h3")}</Px>,
  <Px r={[...block(0, 1, 2, 2), ...sq(3, 1, R), ...block(10, 11, 2, 2, R), ...sq(10, 11)]}>{link("M9 5L7 13h3")}</Px>,
  <Px r={[...block(3, 1, 4, 2), ...block(3, 12, 4, 1, R)]}>{link("M9 8v4M6 11h7")}</Px>,
  <Px r={[...block(1, 2, 2, 4), ...block(13, 2, 1, 4, R)]}>{link("M8 9h5M10 6v6")}</Px>,
  <Px r={[...block(1, 2, 2, 4), ...sq(4, 5, "#e23be2"), ...block(13, 2, 1, 4, R), ...sq(13, 11, "#3cb8ef")]}>{link("M8 9h5M10 6v6")}</Px>,
];
const tableIcons = [
  <Px r={[[2, 1, 15, 16, "#8a8c8a"], [3, 2, 13, 3, "#f2f2ee"], [3, 6, 4, 10, "#f2f2ee"], [8, 6, 4, 10, "#f2f2ee"], [13, 6, 3, 10, "#f2f2ee"], [4, 3, 4, 1, R], [10, 3, 5, 1, "#477"], [4, 8, 2, 1, "#345"], [9, 8, 2, 1, "#345"], [4, 11, 2, 1, "#345"], [9, 11, 2, 1, "#345"], [4, 14, 2, 1, "#345"], [9, 14, 2, 1, "#345"], [14, 9, 1, 5, "#d55"]]} />,
  <Px r={[[1, 3, 2, 3, "#4a7f9a"], [1, 8, 2, 3, "#4a7f9a"], [1, 13, 2, 3, "#4a7f9a"], [5, 2, 12, 15, "#8a8c8a"], [6, 3, 4, 3, "#fff"], [12, 3, 4, 3, "#fff"], [6, 8, 4, 3, "#fff"], [12, 8, 4, 3, "#fff"], [6, 13, 4, 3, "#fff"], [12, 13, 4, 3, "#fff"], [7, 4, 2, 1, "#28a"], [13, 9, 2, 1, "#28a"]]} />,
];
const P2 = ({ d, f = "none", w = 1.5, c = "#4d689c" }) => <Px><path d={d} fill={f} stroke={c} strokeWidth={w} /></Px>;

/* ---------- data ---------- */
const lbi = [11, 8, 5, 14, 19, 6, 10, 6, 11, 3, 6, 6, 7, 8, 18, 8, 19, 8, 5, 15];
const lbs = [6, 0, 2, 8, 11, 4, 13, 1, 8, 0, 0, 2, 3, 1, 18, 4, 14, 9, 1, 9];
const points = [[3, 0], [5, 1], [5, 2], [6, 0], [6, 1], [6, 2], [6, 4], [7, 1], [7, 3], [8, 0], [8, 1], [8, 4], [8, 9], [9, 5], [10, 13], [11, 6], [11, 8], [11, 18], [12, 5], [12, 16], [12, 20], [13, 10], [14, 8], [15, 9], [16, 12], [16, 13], [18, 18], [19, 11], [19, 14], [21, 23]];
const menu = [["File", 36], ["Edit", 40], ["Tables", 57], ["Rows", 50], ["Cols", 42], ["DOE", 45], ["Analyze", 66], ["Graph", 56], ["Tools", 51], ["View", 45], ["Window", 69], ["Help", 40]];
const tasks = [
  [<PptIcon />, "Le..."], [<PptIcon />, "W..."], [<PptIcon />, "W..."], [<PdfIcon />, "S..."], [<QtIcon />, "20..."], [<FoxIcon />, "In..."], [<PptIcon />, "le..."],
  [<WordIcon />, "S..."], [<JmpTask />, "J...", true], [<PptIcon />, "st..."], [<HelpDoc />, "J..."], [<MailIcon />, "M..."], [<ExcelIcon />, "Mi..."], [<MailIcon />, "M..."],
];

/* chart origin equals the inner corner of the plot frame */
const Chart = () => {
  const X = (v) => Math.round(46.5 + (v - 2.5) * 12);
  const Y = (v) => Math.round(172 - v * 6.56);
  return (
    <svg width="299" height="234" viewBox="0 0 299 234" fontFamily="Liberation Sans, Arial, sans-serif" fontSize="12">
      <rect x="46.5" y="8.500" width="240" height="180" fill="#fff" stroke="#000" />
      {[0, 5, 10, 15, 20, 25].map((v) => (
        <g key={v}>
          <path d={`M40 ${Y(v) + 0.5}h6`} stroke="#000" />
          <text x="37.500" y={Y(v) + 4} textAnchor="end">{v}</text>
          {v < 25 && <path d={`M43 ${Y(v + 2.5) + 0.5}h3`} stroke="#000" />}
        </g>
      ))}
      <path d="M43 188.500h3M46.500 189v3M286.500 189v3" stroke="#000" />
      {[5, 10, 15, 20].map((v) => (
        <g key={v}>
          <path d={`M${X(v) - 0.5} 189v6`} stroke="#000" />
          <text x={X(v) - 1} y="207" textAnchor="middle" letterSpacing=".2">{v}</text>
        </g>
      ))}
      {[7.5, 12.5, 17.5].map((v) => <path key={v} d={`M${X(v) - 0.5} 189v3`} stroke="#000" />)}
      {points.map(([a, b], i) => <rect key={i} x={X(a) - 2} y={Y(b) - 1} width="3" height="2" fill="#000" />)}
      <text x="165" y="226" textAnchor="middle">LBI</text>
      <text transform="translate(18 99) rotate(-90)" textAnchor="middle">LBS</text>
    </svg>
  );
};
const MiniPlot = ({ x, y, w, h }) => (
  <svg width="47" height="47">
    <path d="M1 2h16M19 2h13" stroke="#8c8777" strokeWidth="2" strokeDasharray="3 .7" />
    <rect x={x} y={y} width={w} height={h} fill="#fff" stroke="#b4b4b8" strokeWidth=".8" />
    {points.map(([a, b], i) => <rect key={i} x={x + ((a - 2.5) / 20) * w} y={y + h - ((b + 2.5) / 27.5) * h} width="1.100" height="1.100" fill="#999" />)}
    <path d={`M${x - 3} ${y + 2}v${h - 4}M${x + 2} ${y + h + 3}h${w - 4}`} stroke="#a0a0a0" strokeDasharray="1 4" strokeWidth="2" />
    {h < 26 && <path d="M3 37h12M8 35v2M4 41h18M2 45h30" stroke="#a79880" strokeDasharray="4 1" />}
    {x === 7 && <rect x="44" y="1" width="3" height="17" fill="#b9ccf8" />}
  </svg>
);
const MiniText = () => (
  <svg width="47" height="47">
    <path d="M0 4h30M0 12h28M0 23h28M0 34h28M0 41h20M37 4h10" stroke="#d9d3bc" strokeWidth="2" />
    <path d="M2 2h22M2 6h16M10 9h15M3 15h20M3 18h20M3 20.500h18M3 27h6M12 27h16M3 30h26M3 38h6M12 38h17M3 45h24" stroke="#77736a" strokeWidth="1.300" strokeDasharray="3 1" />
    <path d="M38 8h9M39 12h7M40 16h5M38 19h9" stroke="#8a867d" strokeDasharray="2 1" />
  </svg>
);

const Arrow = ({ d, c = "#4d6185", w = 2 }) => (
  <svg width="10" height="10"><path d={d} fill="none" stroke={c} strokeWidth={w} /></svg>
);

function DataTable() {
  return (
    <Table>
      <TableRow $head>
        <Corner>
          <svg width="9" height="14"><path d="M8 1v12L1.500 7z" fill="#f6f6f4" stroke="#888" /></svg>
          <Hot />
          <Hot />
        </Corner>
        <HeadCell>Drug</HeadCell>
        <HeadCell>LBI</HeadCell>
        <HeadCell $on>LBS</HeadCell>
        <HeadCell>Diff Before -<br />After</HeadCell>
        <HeadCell />
      </TableRow>
      {lbi.map((v, i) => (
        <TableRow key={i}>
          <Cell $num>{i + 1}</Cell>
          <Cell $left>{i < 10 ? "a" : "d"}</Cell>
          <Cell>{v}</Cell>
          <Cell $on>{lbs[i]}</Cell>
          <Cell>{i < 2 ? v - lbs[i] : ""}</Cell>
          <Cell />
        </TableRow>
      ))}
      <TableRow><Cell $num /><Cell /><Cell /><Cell $on /><Cell /><Cell /></TableRow>
    </Table>
  );
}
const ColMark = () => <svg width="13" height="14"><path d="M1 11.500L12 1v10.500z" fill="#2e6cc0" stroke="#5a8ed6" /></svg>;

function MainWindow() {
  return (
    <Window $x={30} $y={0} $w={629} $h={663}>
      <Titlebar $h={44} $pad="3px 6px 0 6px">
        <JmpSmall />
        <TitleText $ls="-0.15px" $pl={4}>DrugLBI - JMP</TitleText>
        <Caption />
      </Titlebar>
      <MenuBar>{menu.map(([t, w]) => <MenuItem key={t} $w={w}>{t}</MenuItem>)}</MenuBar>
      <ToolArea>
        <ToolLine>
          <Toolbar $w={228}>
            <ToolGrip />
            {toolsA.map((t, i) => <ToolSlot key={i} $dim={i === 3}>{t}</ToolSlot>)}
            <ToolSep />
            {toolsB.map((t, i) => <ToolSlot key={i}>{t}</ToolSlot>)}
            <ToolSlot $dim>{pasteIcon}</ToolSlot>
            <ToolSep />
            <ToolSlot>{journalIcons[0]}</ToolSlot>
            <ToolSlot $dim>{pdfDim}</ToolSlot>
            <More />
          </Toolbar>
          <Toolbar $w={272}>
            <ToolGrip />
            <ToolSlot>{jmpGroup[0]}</ToolSlot>
            <ToolSep />
            {jmpGroup.slice(1).map((t, i) => <ToolSlot key={i}>{t}</ToolSlot>)}
            <ToolSep />
            {tableIcons.map((t, i) => <ToolSlot key={i}>{t}</ToolSlot>)}
            <More />
          </Toolbar>
        </ToolLine>
        <ToolLine>
          <Toolbar $w={316}>
            <ToolGrip />
            <ToolSlot $on><P2 d="M5 1v13l3-3 2 5 2-1-2-5h4z" f="#fff" w={1.2} c="#1d3f86" /></ToolSlot>
            <ToolSlot><Px><path d="M5.500 6q0-3 3.500-3t3.500 2.500q0 2-2 3Q9 9.500 9 12M9 13.500v2.500" fill="none" stroke="#1657c0" strokeWidth="2.600" /></Px></ToolSlot>
            <ToolSlot $dim><P2 d="M7 3h4v4h4v4h-4v4H7v-4H3V7h4z" f="#fff" /></ToolSlot>
            <ToolSlot $dim><Px><circle cx="9" cy="9" r="6" fill="#fff" stroke="#4d689c" strokeWidth="1.500" /><path d="M9 4v10M4 9h10" stroke="#4d689c" strokeWidth="2.600" strokeDasharray="3 1" /></Px></ToolSlot>
            <ToolSep />
            <ToolSlot $dim><P2 d="M6 16q-2-4-4-7 1-1 3 1L4 3q2-1 3 5V1q2-1 2 7l2-6q2 0 1 7l2-4q2 0 0 6l-2 5z" f="#fff" w={1.1} /></ToolSlot>
            <ToolSlot $dim><Px><path d="M2 12q4 5 8-1l-3-3q-5 0-5 4" fill="#d39232" stroke="#7a5c36" /><path d="M9 9l7-8-4 10z" fill="#6995d8" stroke="#4a6ca8" /></Px></ToolSlot>
            <ToolSlot $dim><P2 d="M6 8Q5 3 11 3t5 4-6 4-4-2l3 3-1-3-6 7" /></ToolSlot>
            <ToolSlot $dim><Px><circle cx="7" cy="7" r="4.500" fill="#fff" stroke="#4d689c" strokeWidth="1.400" /><path d="M10 10l6 6" stroke="#c48b3c" strokeWidth="2.600" /></Px></ToolSlot>
            <ToolSlot $dim><P2 d="M9 3v13M3 9.500h12" w={2} /></ToolSlot>
            <ToolSep />
            <ToolSlot $dim><Px><path d="M2 3h14v12H2z" fill="#f2f4f8" stroke="#4d689c" /><path d="M4 6h6M7 6v6M12 6h3M12 9h3M12 12h3" stroke="#2f3d58" strokeWidth="1.400" /></Px></ToolSlot>
            <ToolSlot $dim><Px><path d="M2 5h14" stroke="#4d5f86" strokeWidth="4" /><path d="M2 10h14" stroke="#4d5f86" strokeWidth="2" /><path d="M2 14h11M12 12l3 2-3 2" fill="none" stroke="#4d5f86" /></Px></ToolSlot>
            <ToolSlot $dim><P2 d="M5 3h5l4 5-2 4-8 3-2-5z" f="#fff" /></ToolSlot>
            <ToolSlot $dim><Px><ellipse cx="9" cy="9.500" rx="7.500" ry="5" fill="#fff" stroke="#4d689c" strokeWidth="1.400" /></Px></ToolSlot>
            <More />
          </Toolbar>
        </ToolLine>
      </ToolArea>
      <JmpBody>
        <LeftCol>
          <Panel>
            <PanelHead><Hot /><span>DrugLBI</span><svg width="9" height="13"><path d="M1.500 1v11L7.500 6.500z" fill="#f6f6f4" stroke="#888" /></svg></PanelHead>
            <Line $ls="0.15px"><i>Locked File</i>{"  C:\\Documents and Se"}</Line>
            <Line $ls="0.14px">{"Notes  From Snedecor and Cockra"}</Line>
          </Panel>
          <Double />
          <Panel>
            <PanelHead $mb={1}><Hot /><span>Columns (4/1)</span></PanelHead>
            <Line $gap={4}><Px w={13} h={14} r={[[1, 4, 3, 8, "#c82a12"], [5, 0, 3, 12, "#d93318"], [9, 6, 3, 6, "#c82a12"], [1, 12, 12, 1, "#a0a0a0"]]} /><span>Drug</span></Line>
            <Line $gap={4}><ColMark /><span>LBI</span></Line>
            <Line $gap={4}><ColMark /><Picked>LBS</Picked></Line>
            <Line $gap={4} $ls="0"><ColMark /><FormulaName>Diff Before - After<svg width="12" height="12"><path d="M6 0v12M0 6h12" stroke="#1c2f66" strokeWidth="4" /><path d="M6 1v10M1 6h10" stroke="#8aa6d6" strokeWidth="1.500" /></svg></FormulaName></Line>
          </Panel>
          <Double />
          <Panel>
            <PanelHead $mb={1}><Hot /><span>Rows</span></PanelHead>
            {[["All rows", 30], ["Selected", 0], ["Excluded", 0], ["Hidden", 0], ["Labelled", 0]].map(([a, b]) => (
              <Line key={a} $between><span>{a}</span><span>{b}</span></Line>
            ))}
          </Panel>
        </LeftCol>
        <Double $v />
        <GridArea>
          <DataTable />
          <VScroll>
            <ScrollBtn $v><Arrow d="M1 7l4-4 4 4" /></ScrollBtn>
            <ScrollBtn $v $h={402} />
          </VScroll>
          <HScroll>
            <ScrollBtn><Arrow d="M7 1L3 5l4 4" /></ScrollBtn>
            <ScrollBtn $w={315} $h={19}><Px w={9} h={6} r={[[0, 0, 1, 6, "#9db5e8"], [2, 0, 1, 6, "#9db5e8"], [4, 0, 1, 6, "#9db5e8"], [6, 0, 1, 6, "#9db5e8"], [8, 0, 1, 6, "#9db5e8"]]} /></ScrollBtn>
            <svg width="45" height="1" />
            <ScrollBtn><Arrow d="M3 1l4 4-4 4" /></ScrollBtn>
          </HScroll>
        </GridArea>
      </JmpBody>
      <ThumbStrip>
        <MiniReport><MiniText /></MiniReport>
        <MiniReport><MiniPlot x={7} y={5} w={28} h={22} /></MiniReport>
        <MiniReport><MiniPlot x={8} y={5} w={30} h={23} /></MiniReport>
        <MiniReport><MiniPlot x={11} y={7} w={36} h={30} /></MiniReport>
      </ThumbStrip>
      <JmpStatus $h={22} $mt={1}>
        <span>evaluations done</span>
        <StatusIcons $gap={4}><Home /><Box /><Tri $s={4} $c="#111" /><Px w={7} h={1} /></StatusIcons>
        <ResizeGrip />
      </JmpStatus>
    </Window>
  );
}

function BackWindow() {
  return (
    <Window $x={420} $y={4} $w={378} $h={540}>
      <Titlebar $h={44} $pad="4px 8px 0 6px"><TitleText /><Caption /></Titlebar>
      <BackArea>
        <i />
        <BackTools>
          <Toolbar $w={120}>
            <svg width="35" height="1" />
            <ToolSlot><Px><path d="M0 4h8v5H0M0 14h8M8 6h6" fill="none" stroke="#777" /><path d="M0 2h8v3H0" fill="none" stroke="#d66" /><path d="M0 8h8v3H0" fill="none" stroke="#593" /></Px></ToolSlot>
            <ToolSlot><Px><path d="M1 15q4 0 7-11 2-2 4 4t4 8M11 3h4" fill="none" stroke="#233b63" strokeWidth="1.300" /><path d="M9 2v15" stroke="#a5123c" /></Px></ToolSlot>
            <ToolSep />
            <ToolSlot><Px><path d="M1 2h8v4h4v4h3" fill="none" stroke="#2784c8" strokeWidth="1.500" /><path d="M1 6h4v4h5v4h6" fill="none" stroke="#a5123c" strokeWidth="1.500" /></Px></ToolSlot>
            <More />
          </Toolbar>
        </BackTools>
        <BackBlue><Funnel /><Tri $s={4} $c="#000" $m="0 8px 0 0" /><Funnel off /></BackBlue>
        <BackWhite />
      </BackArea>
    </Window>
  );
}

function FitWindow() {
  return (
    <Window $x={521} $y={199} $w={326} $h={348} $active>
      <Titlebar $active $h={45} $pad="3px 6px 0 7px">
        <Px w={14} h={12} r={[[2, 2, 1, 7, "#123a80"], [2, 8, 6, 1, "#123a80"], [5, 3, 2, 1, "#0a2a60"], [7, 6, 2, 2, "#0a2a60"]]} />
        <TitleText $active $ls="0.35px" $pl={4}>DrugLBI - Fit Y...</TitleText>
        <Caption active />
      </Titlebar>
      <Strip />
      <Report>
        <svg width="11" height="22"><path d="M1 15h8V6z" fill="#ccc" stroke="#777" /></svg>
        <ReportHead><Hot /><span>{"Bivariate Fit of LBS  By LBI"}</span></ReportHead>
        <PlotFrame><Chart /></PlotFrame>
      </Report>
      <JmpStatus $h={21}>
        <span />
        <StatusIcons $gap={3}><Home /><SheetIcon /><Box $ml={6} $mr={2} /><Tri $s={4} $c="#111" /><Px w={8} h={1} /></StatusIcons>
        <ResizeGrip />
      </JmpStatus>
    </Window>
  );
}

const thumbDots = {
  25: ["#d8843c", "#c9c9d8", "#c9c9d8"],
  28: ["#c9b9c9", "#c9c9d8", "#c9b9c9"],
  29: ["#d8843c", "#c59ad0", "#d8843c", "#8aa"],
  30: ["#d8843c", "#c59ad0", "#d8843c", "#c97"],
};

export default function App() {
  return (
    <Desktop>
      <Global />
      <TopRow>
        <TitleRow>
          <TitleLeft><PptIcon /><Divider /></TitleLeft>
          <WinCtl>
            <svg width="28" height="30"><rect x="2" y="19" width="25" height="8" rx="1" fill="#fff" stroke="#63666e" strokeWidth="1.500" /></svg>
            <svg width="32" height="31"><path d="M10 1h21v20H10z" fill="#fff" stroke="#63666e" strokeWidth="1.500" /><path d="M15 7h10v8H15z" fill="none" stroke="#63666e" strokeWidth="1.500" /><path d="M1 10h21v20H1z" fill="#fff" stroke="#63666e" strokeWidth="1.500" /><path d="M7 17h9v7H7z" fill="none" stroke="#63666e" strokeWidth="1.500" /></svg>
            <svg width="28" height="31"><path d="M2 6h6l6 6 6-6h6l-1 4-7 6 7 7 1 4h-6l-6-6-6 6H2l1-4 7-7-7-6z" fill="#fff" stroke="#63666e" strokeWidth="1.500" /></svg>
          </WinCtl>
        </TitleRow>
        <TabRow>
          <FileTab />
          <HelpRow>
            <svg width="15" height="25"><path d="M2 19q-1-3 2-5l4-4 4 4q3 2 1 5-2 2-5-1-4 3-6 1" fill="#fff" stroke="#666" strokeWidth="1.500" /></svg>
            <svg width="25" height="25"><circle cx="12.500" cy="12.500" r="12" fill="#2f6fbd" /><circle cx="12.500" cy="12.500" r="10.500" fill="#4a8bd6" /><path d="M8.500 9.500q0-4 4-4t4 3.500q0 2-4 4.500v1.500M12.500 17v3" fill="none" stroke="#fff" strokeWidth="2.600" /></svg>
          </HelpRow>
        </TabRow>
      </TopRow>
      <Ribbon>
        <ClipGroup>
          <Clipboard />
          <PasteText>Paste</PasteText>
          <GroupName $m="25px 0 0 7px">Clipboard</GroupName>
        </ClipGroup>
        <RibbonRight>
          <RibbonCol $align="flex-start">
            <ArrangeIcon />
            <Label $m="5px 0 0 -9px">Arrange</Label>
            <Tri $s={4} $m="6px 0 0 13px" />
            <GroupName $m="16px 0 0 0">Drawing</GroupName>
          </RibbonCol>
          <RibbonCol $dim>
            <Px w={1} h={2} />
            <StylesIcon />
            <Label $m="4px 4px 0 0">Quick</Label>
            <Label $m="0 4px 0 0">Styles<Tri $s={4} $c="#b0b1b5" /></Label>
          </RibbonCol>
          <RibbonCol $dim $line>
            <ToolPair><FillIcon /><Tri $s={3} $c="#b5b6ba" /></ToolPair>
            <ToolPair><OutlineIcon /><Tri $s={3} $c="#b5b6ba" /></ToolPair>
            <ToolPair><EffectIcon /><Tri $s={3} $c="#b5b6ba" /></ToolPair>
            <Px w={30} h={24}><path d="M21 20v-8h8M23 14l6 6M29 15v5h-5" fill="none" stroke="#a2a7ae" /></Px>
          </RibbonCol>
          <RibbonCol $line>
            <FindButton><Bino /></FindButton>
            <Label $m="6px 0 0 2px">Editing</Label>
            <Tri $s={4} $m="6px 0 0 3px" />
          </RibbonCol>
          <i />
        </RibbonRight>
      </Ribbon>
      <Workspace>
        <SlideList>
          <CheckBox />
          {[25, 26, 27, 28, 29, 30, 31].map((n) => (
            <SlideItem key={n} $on={n === 27}>
              <SlideNo>{n}{n === 28 && <span><StarFx /></span>}</SlideNo>
              <SlideThumb>{(thumbDots[n] || []).map((c, i) => <Dot key={i} $c={c} />)}</SlideThumb>
            </SlideItem>
          ))}
        </SlideList>
        <Editor>
          <Canvas><Slide /></Canvas>
          <ScrollCol $pad="0 0 25px">
            <Tri $s={6} $c="#666" />
            <ScrollBreak />
            <TriUp $s={4} $c="#000" $m="0 0 1px" /><TriUp $s={4} $c="#000" />
            <Tri $s={4} $c="#000" $m="11px 0 1px" /><Tri $s={4} $c="#000" />
          </ScrollCol>
          <Edge />
          <SplitLine />
          <Notes />
          <ScrollCol $spread $pad="6px 0 7px"><TriUp $s={6} $c="#8a9896" /><Tri $s={6} $c="#8a9896" /></ScrollCol>
          <Edge />
        </Editor>
        <Pane>
          <PaneHead>
            <b>Animation Pane</b>
            <Tri $s={6} $c="#444" $m="0 12px 0 0" />
            <svg width="9" height="9"><path d="M1 1l7 7M8 1L1 8" stroke="#444a52" strokeWidth="2" /></svg>
          </PaneHead>
          <PlayButton>Play</PlayButton>
          <AnimList />
          <Reorder>
            <ArrowBtn><svg width="11" height="11"><path d="M5.500 0L11 5.500H8V11H3V5.500H0z" fill="#99988c" /></svg></ArrowBtn>
            Re-Order
            <ArrowBtn><svg width="11" height="11"><path d="M5.500 11L11 5.500H8V0H3v5.500H0z" fill="#99988c" /></svg></ArrowBtn>
          </Reorder>
        </Pane>
      </Workspace>
      <StatusBar>
        <StatusCell $pl={8}>Slide 27 of 38</StatusCell>
        <StatusCell $pl={9}>"Office Theme"</StatusCell>
        <StatusCell $pl={8} $ls="0.1px">
          <svg width="26" height="25"><path d="M1 13l8-4 4 3 7-4 4 7-12 8L1 18z" fill="#4e77bd" /><path d="M2 12l7-4 4 3 7-4 3 7-11 6L2 16z" fill="#f6f9ff" stroke="#9ab" /><path d="M12 3l11 11M22 2L12 15" stroke="#e23a24" strokeWidth="2.600" /></svg>
          English (Australia)
        </StatusCell>
        <StatusCell />
        <ViewTools>
          <ViewSlot $on><Px w={18} h={15} r={[[0, 0, 18, 15, "#5a5c60"], [2, 2, 7, 11, "#fff"], [11, 2, 5, 7, "#e3e4e8"], [11, 11, 5, 2, "#fff"]]} /></ViewSlot>
          <ViewSlot><Px w={17} h={15} r={[[0, 0, 7, 6, "#55575c"], [1, 2, 5, 3, "#fff"], [10, 0, 7, 6, "#55575c"], [11, 2, 5, 3, "#fff"], [0, 9, 7, 6, "#55575c"], [1, 11, 5, 3, "#fff"], [10, 9, 7, 6, "#55575c"], [11, 11, 5, 3, "#fff"]]} /></ViewSlot>
          <ViewSlot><Px w={17} h={16}><path d="M1 1h6l1.500 2L10 1h6v12h-6l-1.500 2L7 13H1z" fill="#fff" stroke="#5a5c60" /><path d="M8.500 2v13M3 4h3M3 7h3M3 10h3M11 4h3M11 7h3M11 10h3" stroke="#5a5c60" /></Px></ViewSlot>
          <ViewSlot><Px w={17} h={16}><path d="M0 1h17v3H0z" fill="#55575c" /><path d="M2.500 4h12v5h-12z" fill="#fff" stroke="#55575c" /><path d="M8.500 9v5M4 15h9" stroke="#55575c" strokeWidth="2" /></Px></ViewSlot>
          <Percent>50%</Percent>
          <ZoomKnob><Px w={11} h={11} r={[[0, 4, 11, 3, "#6c6e72"]]} /></ZoomKnob>
          <ZoomTrack><svg width="148" height="22"><path d="M72.500 7v7" stroke="#909398" /><path d="M31 2h13v12l-6.500 6L31 14z" fill="#f0f1f3" stroke="#6b6e73" strokeWidth="1.500" /></svg></ZoomTrack>
          <ZoomKnob><Px w={11} h={11} r={[[0, 4, 11, 3, "#55575c"], [4, 0, 3, 11, "#55575c"]]} /></ZoomKnob>
          <svg width="34" height="25"><rect x="10" y="1" width="22" height="22" rx="2" fill="#e8e9ec" stroke="#55575c" strokeWidth="1.500" /><path d="M21 4v6M18 7h6M21 14v6M18 17h6M14 9v6M11 12h6M28 9v6M25 12h6" stroke="#444" strokeWidth="1.400" /><path d="M13 4h16v16H13z" fill="none" stroke="#888" strokeDasharray="2 2" /></svg>
        </ViewTools>
      </StatusBar>
      <Taskbar>
        <Start><WinFlag />start</Start>
        <Quick><Grip $col={1} />{quickIcons.slice(0, 5)}<Grip $col={7} />{quickIcons.slice(5)}</Quick>
        <Tasks>
          {tasks.map(([icon, t, on], i) => <TaskButton key={i} $on={on}>{icon}<span>{t}</span></TaskButton>)}
        </Tasks>
        <TaskScroll>
          <ScrollKey><Arrow d="M1 7l4-4 4 4" c="#fff" /></ScrollKey>
          <ScrollKey $flat />
          <ScrollKey />
          <ScrollKey><Arrow d="M1 3l4 4 4-4" c="#fff" /></ScrollKey>
        </TaskScroll>
        <Tray>
          <TrayIcons>
            <svg width="17" height="17"><path d="M9 1h7v9q-2 5-6 6z" fill="#6d78b8" stroke="#2c2f55" /><path d="M1 2h9M2 5h8M3 8h7M4 11h6M6 14h4" stroke="#23263f" strokeWidth="1.800" /></svg>
            <svg width="17" height="17"><path d="M6 1h9v7H6z" fill="#3c4d8b" stroke="#b9c0dc" /><path d="M1 6h8v7H1z" fill="#2c3b74" stroke="#b9c0dc" /><path d="M3 15h6M10 10l5 1v3h-5" fill="#9098bb" stroke="#c6cce0" /></svg>
            <svg width="16" height="16"><rect width="16" height="16" fill="#fff" stroke="#222" /><path d="M2 3l3 10L8 4" fill="none" stroke="#119c2a" strokeWidth="2.200" /><path d="M10 7V3q4-2 4 4" fill="none" stroke="#1b3fd0" strokeWidth="1.600" /><path d="M14 9h-3v5h4M11 11.500h3" fill="none" stroke="#d01b2b" strokeWidth="1.500" /></svg>
          </TrayIcons>
          <Clock>10:30 PM<br />Saturday</Clock>
        </Tray>
      </Taskbar>
      <Chevron><Arrow d="M7 1L3 5l4 4" c="#fff" /></Chevron>
      <BackWindow />
      <VendorBar>
        <VendorLogo><LgIcon />LG</VendorLogo>
        <svg width="17" height="17"><rect width="17" height="17" fill="#f3c04a" /><ellipse cx="8" cy="9" rx="7.500" ry="5.500" fill="#e8eef2" stroke="#333" transform="rotate(-25 8 9)" /><path d="M3 12l4-3M10 8l5-4" stroke="#4ba05a" strokeWidth="2" /><circle cx="8" cy="9" r="2" fill="#fff" stroke="#444" /></svg>
        <svg width="17" height="17"><path d="M2 12Q3 1 14 1v14H1z" fill="#fff" stroke="#111" /><path d="M3 10l7-5 3 6z" fill="#cfd8d6" stroke="#222" /><path d="M0 12h16v4H0z" fill="#2b66b0" stroke="#111" /><path d="M4 12v4M8 12v4M12 12v4" stroke="#dfe" /></svg>
        <svg width="17" height="17"><rect width="17" height="17" fill="#7eb0d8" /><circle cx="8.500" cy="8.500" r="6.500" fill="#b2151c" stroke="#f4cf9c" strokeWidth="1.500" /><path d="M4 9h9q-1 4-4.500 4T4 9" fill="#f5b62c" /></svg>
        <svg width="33" height="18"><circle cx="13" cy="9" r="8" fill="#dfeafb" stroke="#66779e" strokeWidth="1.500" /><path d="M9 6.500h8L13 12z" fill="#111" /></svg>
      </VendorBar>
      <MainWindow />
      <FitWindow />
    </Desktop>
  );
}
